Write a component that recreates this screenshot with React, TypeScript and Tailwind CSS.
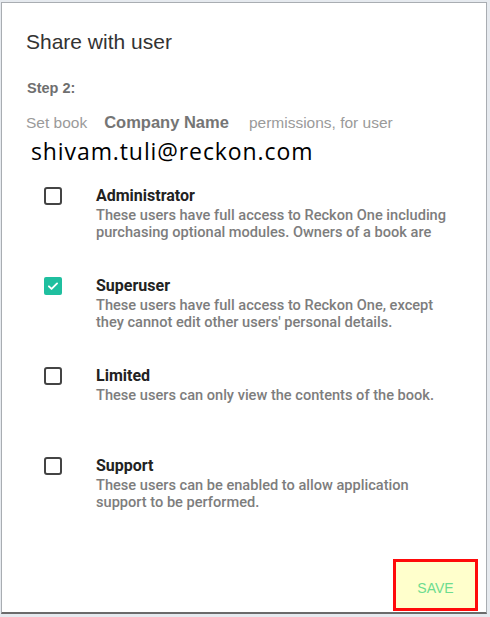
import React from "react";

const roles = [
  {
    title: "Administrator",
    desc: ["These users have full access to Reckon One including", "purchasing optional modules. Owners of a book are"],
    checked: false,
  },
  {
    title: "Superuser",
    desc: ["These users have full access to Reckon One, except", "they cannot edit other users' personal details."],
    checked: true,
  },
  {
    title: "Limited",
    desc: ["These users can only view the contents of the book."],
    checked: false,
  },
  {
    title: "Support",
    desc: ["These users can be enabled to allow application", "support to be performed."],
    checked: false,
  },
];

function Box({ checked }: { checked: boolean }) {
  if (checked) {
    return (
      <div className="w-[18px] h-[18px] rounded-[2px] bg-[#1fbf9f] flex items-center justify-center">
        <svg width="14" height="14" viewBox="0 0 24 24" fill="none" stroke="white" strokeWidth="3.2" strokeLinecap="round" strokeLinejoin="round">
          <path d="M5 12.5l4.5 4.5L19 7.5" />
        </svg>
      </div>
    );
  }
  return <div className="w-[18px] h-[18px] rounded-[3px] border-2 border-[#444]" />;
}

export default function App() {
  return (
    <div className="w-[490px] h-[617px] bg-[#e6eaef] overflow-hidden" style={{ fontFamily: '"Liberation Sans", Arial, sans-serif' }}>
      <div className="ml-[1px] mt-[2px] w-[486px] h-[612px] bg-white border-t border-l border-r border-[#a9adb2] border-b-2 border-b-[#6b6b6b] flex flex-col">
        <div className="pl-[24px] pt-[25px] text-[21px] leading-[28px] text-[#333]">Share with user</div>
        <div className="pl-[25px] pt-[23px] text-[14.5px] leading-[18px] font-bold text-[#6f6f6f]">Step 2:</div>
        <div className="pl-[24px] pt-[14px] flex items-baseline text-[15.5px] leading-[22px] text-[#9a9a9a]">
          <span>Set book</span>
          <span className="ml-[17px] text-[16.5px] font-bold text-[#757575]">Company Name</span>
          <span className="ml-[20px]">permissions, for user</span>
        </div>
        <div className="pl-[29px] pt-[2px] text-[23px] leading-[30px] tracking-[0.9px] text-black" style={{ fontFamily: '"Open Sans", "Noto Sans", sans-serif' }}>
          shivam.tuli@reckon.com
        </div>
        <div className="flex flex-col pt-[20px]">
          {roles.map((r) => (
            <div key={r.title} className="flex h-[90px] pl-[42px]">
              <div className="pt-[1px]">
                <Box checked={r.checked} />
              </div>
              <div className="ml-[34px]" style={{ fontFamily: 'Roboto, "Liberation Sans", sans-serif' }}>
                <div className="text-[16px] leading-[19px] font-bold text-[#222]">{r.title}</div>
                <div className="mt-[2px] text-[14.6px] leading-[17px] font-medium text-[#7d7d7d]">
                  {r.desc.map((d) => (
                    <div key={d}>{d}</div>
                  ))}
                </div>
              </div>
            </div>
          ))}
        </div>
        <div className="flex-1" />
        <div className="flex justify-end pr-[8px] pb-[1px]">
          <div className="w-[85px] h-[52px] border-[3px] border-[#ff0a0a] bg-[#ffffcc] flex items-end justify-center pb-[9px] text-[14px] text-[#6ddc8f]">
            SAVE
          </div>
        </div>
      </div>
    </div>
  );
}
